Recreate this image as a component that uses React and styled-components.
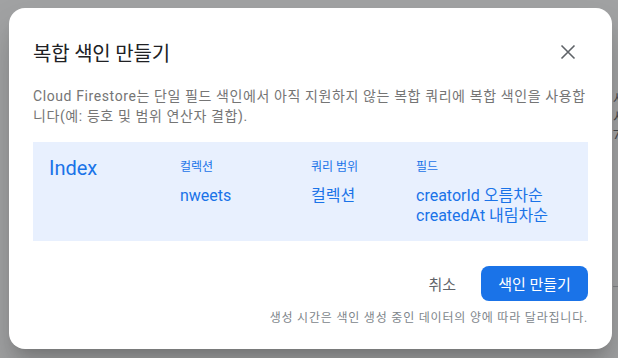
import React from 'react'
import styled, { createGlobalStyle } from 'styled-components'

const GlobalStyle = createGlobalStyle`
  html, body {
    margin: 0;
    padding: 0;
  }
  body {
    font-family: Roboto, "Noto Sans CJK KR", sans-serif;
    -webkit-font-smoothing: antialiased;
  }
`

const Screen = styled.div`
  position: relative;
  width: 618px;
  height: 358px;
  overflow: hidden;
  background: #fff;
`

const PageEdge = styled.div`
  display: flex;
  flex-direction: column;
  padding: 90px 0 0 613px;
  font-size: 13px;
  line-height: 18px;
  color: #5f6368;
  white-space: nowrap;
`

const PageRule = styled.div`
  margin-top: 142px;
  border-top: 1px solid #c4c7ca;
`

const Overlay = styled.div`
  position: absolute;
  inset: 0;
  background: rgba(32, 33, 36, 0.42);
  display: flex;
  align-items: flex-start;
  padding: 8px 0 0 9px;
`

const Dialog = styled.div`
  width: 603px;
  height: 341px;
  box-sizing: border-box;
  background: #fff;
  border-radius: 16px;
  padding: 24px 24px 0 24px;
  display: flex;
  flex-direction: column;
  box-shadow: 0 11px 15px -7px rgba(0, 0, 0, 0.2), 0 24px 38px 3px rgba(0, 0, 0, 0.14);
`

const Header = styled.div`
  display: flex;
  align-items: center;
  justify-content: space-between;
  height: 40px;
`

const Title = styled.h2`
  margin: 0;
  font-size: 20px;
  font-weight: 400;
  color: #202124;
  letter-spacing: -0.2px;
`

const CloseButton = styled.button`
  width: 40px;
  height: 40px;
  border: 0;
  padding: 0;
  background: transparent;
  display: flex;
  align-items: center;
  justify-content: center;
  color: #5f6368;
  cursor: pointer;
`

const Description = styled.p`
  margin: 14px 0 0;
  font-size: 14px;
  line-height: 20px;
  letter-spacing: 0.6px;
  color: #757575;
`

const IndexBox = styled.div`
  margin-top: 16px;
  background: #e8f0fe;
  padding: 14px 16px 15px;
  display: grid;
  grid-template-columns: 131px 131px 105px 1fr;
  align-items: start;
`

const IndexName = styled.div`
  font-size: 20px;
  line-height: 24px;
  color: #1a73e8;
`

const Column = styled.div`
  display: flex;
  flex-direction: column;
`

const Label = styled.div`
  font-size: 12px;
  line-height: 22px;
  color: #1a73e8;
`

const Value = styled.div`
  margin-top: ${(p) => (p.$first ? '8px' : '0')};
  font-size: 16px;
  line-height: 20px;
  color: #1a73e8;
`

const Footer = styled.div`
  margin-top: 25px;
  display: flex;
  justify-content: flex-end;
  align-items: center;
`

const TextButton = styled.button`
  height: 35px;
  padding: 0 16px;
  margin-right: 9px;
  border: 0;
  background: transparent;
  font-family: inherit;
  font-size: 15px;
  color: #5f6368;
  cursor: pointer;
`

const PrimaryButton = styled.button`
  width: 107px;
  height: 35px;
  border: 0;
  border-radius: 8px;
  background: #1a73e8;
  color: #fff;
  font-family: inherit;
  font-size: 15px;
  cursor: pointer;
`

const Note = styled.div`
  margin-top: 9px;
  text-align: right;
  font-size: 12px;
  line-height: 16px;
  letter-spacing: 0.8px;
  color: #80868b;
`

const CloseIcon = () => (
  <svg width="24" height="24" viewBox="0 0 24 24" fill="none" stroke="currentColor" strokeWidth="1.6">
    <path d="M5.5 5.5 18.5 18.5M18.5 5.5 5.5 18.5" />
  </svg>
)

const columns = [
  { label: '컬렉션', values: ['nweets'] },
  { label: '쿼리 범위', values: ['컬렉션'] },
  { label: '필드', values: ['creatorId 오름차순', 'createdAt 내림차순'] },
]

const App = () => {
  return (
    <Screen>
      <GlobalStyle />
      <PageEdge>
        <span>사용</span>
        <span>서비</span>
        <span>7</span>
        <PageRule />
      </PageEdge>
      <Overlay>
        <Dialog>
          <Header>
            <Title>복합 색인 만들기</Title>
            <CloseButton aria-label="닫기">
              <CloseIcon />
            </CloseButton>
          </Header>
          <Description>
            Cloud Firestore는 단일 필드 색인에서 아직 지원하지 않는 복합 쿼리에 복합 색인을 사용합니다(예: 등호 및 범위 연산자 결합).
          </Description>
          <IndexBox>
            <IndexName>Index</IndexName>
            {columns.map((col) => (
              <Column key={col.label}>
                <Label>{col.label}</Label>
                {col.values.map((v, i) => (
                  <Value key={v} $first={i === 0}>{v}</Value>
                ))}
              </Column>
            ))}
          </IndexBox>
          <Footer>
            <TextButton>취소</TextButton>
            <PrimaryButton>색인 만들기</PrimaryButton>
          </Footer>
          <Note>생성 시간은 색인 생성 중인 데이터의 양에 따라 달라집니다.</Note>
        </Dialog>
      </Overlay>
    </Screen>
  )
}

export default App
